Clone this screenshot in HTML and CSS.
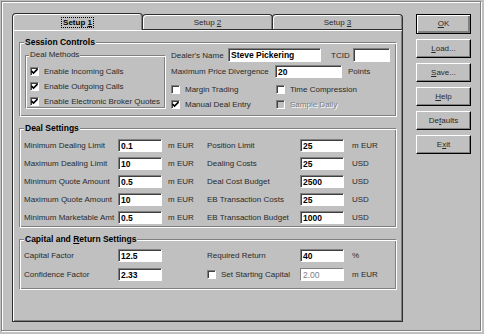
FILE: index.html
```html
<!DOCTYPE html>
<html lang="en">

<head>
    <meta charset="UTF-8">
    <title>Setup</title>
    <link rel="stylesheet" href="styles.css">
</head>

<body>
    <div class="dialog">
        <div class="tabctl">
            <div class="tabstrip">
                <div class="tab active"><span class="focus">Setup <u>1</u></span></div>
                <div class="tab">Setup <u>2</u></div>
                <div class="tab">Setup <u>3</u></div>
            </div>
            <div class="panel">
                <!-- Session Controls -->
                <div class="group session">
                    <div class="group-title">Session Controls</div>
                    <div class="session-body">
                        <div class="group methods">
                            <div class="group-title thin">Deal Methods</div>
                            <div class="check-list">
                                <div class="check"><span class="box"><svg width="7" height="7" viewBox="0 0 7 7"><path d="M0.5 3 L2.5 5 L6.5 1" /></svg></span>Enable Incoming Calls</div>
                                <div class="check"><span class="box"><svg width="7" height="7" viewBox="0 0 7 7"><path d="M0.5 3 L2.5 5 L6.5 1" /></svg></span>Enable Outgoing Calls</div>
                                <div class="check"><span class="box"><svg width="7" height="7" viewBox="0 0 7 7"><path d="M0.5 3 L2.5 5 L6.5 1" /></svg></span>Enable Electronic Broker Quotes</div>
                            </div>
                        </div>
                        <div class="dealer">
                            <div class="row row-name">
                                <span class="name-lbl">Dealer's Name</span>
                                <span class="field name-field">Steve Pickering</span>
                                <span class="tcid-lbl">TCID</span>
                                <span class="field tcid-field"></span>
                            </div>
                            <div class="row row-div">
                                <span class="div-lbl">Maximum Price Divergence</span>
                                <span class="field div-field">20</span>
                                <span class="unit">Points</span>
                            </div>
                            <div class="opts">
                                <div class="check"><span class="box"></span>Margin Trading</div>
                                <div class="check"><span class="box"></span>Time Compression</div>
                                <div class="check"><span class="box"><svg width="7" height="7" viewBox="0 0 7 7"><path d="M0.5 3 L2.5 5 L6.5 1" /></svg></span>Manual Deal Entry</div>
                                <div class="check disabled"><span class="box"></span>Sample Daily</div>
                            </div>
                        </div>
                    </div>
                </div>

                <!-- Deal Settings -->
                <div class="group deal">
                    <div class="group-title">Deal Settings</div>
                    <div class="grid">
                        <span>Minimum Dealing Limit</span><span class="field">0.1</span><span class="unit">m EUR</span>
                        <span>Position Limit</span><span class="field">25</span><span class="unit">m EUR</span>

                        <span>Maximum Dealing Limit</span><span class="field">10</span><span class="unit">m EUR</span>
                        <span>Dealing Costs</span><span class="field">25</span><span class="unit">USD</span>

                        <span>Minimum Quote Amount</span><span class="field">0.5</span><span class="unit">m EUR</span>
                        <span>Deal Cost Budget</span><span class="field">2500</span><span class="unit">USD</span>

                        <span>Maximum Quote Amount</span><span class="field">10</span><span class="unit">m EUR</span>
                        <span>EB Transaction Costs</span><span class="field">25</span><span class="unit">USD</span>

                        <span>Minimum Marketable Amt</span><span class="field">0.5</span><span class="unit">m EUR</span>
                        <span>EB Transaction Budget</span><span class="field">1000</span><span class="unit">USD</span>
                    </div>
                </div>

                <!-- Capital and Return Settings -->
                <div class="group capital">
                    <div class="group-title">Capital and <u>R</u>eturn Settings</div>
                    <div class="grid">
                        <span>Capital Factor</span><span class="field">12.5</span><span class="unit"></span>
                        <span>Required Return</span><span class="field">40</span><span class="unit">%</span>

                        <span>Confidence Factor</span><span class="field">2.33</span><span class="unit"></span>
                        <div class="check"><span class="box"></span>Set Starting Capital</div><span class="field off">2.00</span><span class="unit">m EUR</span>
                    </div>
                </div>
            </div>
        </div>

        <div class="buttons">
            <div class="btn default"><u>O</u>K</div>
            <div class="btn"><u>L</u>oad...</div>
            <div class="btn"><u>S</u>ave...</div>
            <div class="btn"><u>H</u>elp</div>
            <div class="btn">De<u>f</u>aults</div>
            <div class="btn">E<u>x</u>it</div>
        </div>
    </div>
</body>

</html>
```

FILE: styles.css
```css
/* win95 style dialog */
:root {
    --face: #c0c0c0;
    --shadow: #808080;
    --light: #fff;
    --dark: #000;
    --edge: #2e2e2e;
    --text: #2a2a2a;
}

* {
    padding: 0;
    margin: 0;
    box-sizing: border-box;
}

body {
    background-color: var(--face);
    font: 8px "Liberation Sans", Arial, sans-serif;
    color: var(--text);
}

u {
    text-decoration: underline;
}

/* outer etched frame */
.dialog {
    display: flex;
    width: 480px;
    height: 330px;
    margin: 1px;
    padding: 11px 0 0 10px;
    border: 1px solid var(--shadow);
    box-shadow: 1px 1px 0 var(--light), inset 1px 1px 0 var(--light);
}

/* tabs */
.tabctl {
    display: flex;
    flex-direction: column;
    width: 391px;
}

.tabstrip {
    display: flex;
    height: 16px;
    position: relative;
    z-index: 2;
}

.tab {
    flex: 1;
    height: 15px;
    margin-top: 1px;
    padding-top: 2px;
    line-height: 11px;
    text-align: center;
    border: 1px solid var(--edge);
    border-bottom: none;
    border-radius: 4px 4px 0 0;
    box-shadow: inset 1px 1px 0 var(--light), inset -1px 0 0 var(--shadow);
}

.tab + .tab {
    margin-left: -1px;
}

.tab.active {
    height: 17px;
    margin-top: 0;
    padding-top: 3px;
    font-weight: bold;
    color: #000;
    background-color: var(--face);
}

.tab .focus {
    padding: 0 1px;
    outline: 1px dotted #000;
}

.panel {
    height: 293px;
    padding: 12px 6px 0 6px;
    border: 1px solid var(--edge);
    box-shadow: inset 1px 1px 0 var(--light), inset -1px -1px 0 var(--shadow);
}

/* group boxes */
.group {
    position: relative;
    border: 1px solid var(--shadow);
}

.group::after {
    content: "";
    position: absolute;
    top: 0;
    left: 0;
    right: -2px;
    bottom: -2px;
    border: 1px solid var(--light);
    pointer-events: none;
}

.group-title {
    position: relative;
    z-index: 1;
    width: fit-content;
    margin: -6px 0 0 4px;
    padding: 0 1px;
    line-height: 10px;
    font-size: 8.5px;
    font-weight: bold;
    color: #000;
    background-color: var(--face);
}

.group-title.thin {
    margin-left: 3px;
    font-size: 8px;
    font-weight: normal;
    color: var(--text);
}

.session-body {
    display: flex;
    padding: 0 0 5px 5px;
}

.methods {
    width: 140px;
    height: 53px;
    margin-top: 8px;
}

.check-list {
    display: flex;
    flex-direction: column;
    gap: 4px;
    padding: 6px 0 0 4px;
}

.check {
    display: flex;
    align-items: center;
    height: 11px;
    line-height: 11px;
    white-space: nowrap;
}

.box {
    display: flex;
    width: 9px;
    height: 9px;
    margin-right: 5px;
    background-color: #fff;
    border: 1px solid;
    border-color: var(--shadow) var(--light) var(--light) var(--shadow);
    box-shadow: inset 1px 1px 0 #404040;
}

.box svg path {
    fill: none;
    stroke: #000;
    stroke-width: 1.6;
}

.check.disabled {
    color: var(--shadow);
    text-shadow: 1px 1px 0 var(--light);
}

.check.disabled .box {
    background-color: var(--face);
}

/* dealer name etc */
.dealer {
    margin-left: 6px;
    padding-top: 1px;
}

.row {
    display: flex;
    align-items: center;
}

.row-name {
    height: 14px;
}

.row-name .field {
    height: 14px;
}

.row-div {
    height: 13px;
    margin-top: 3px;
}

.name-lbl {
    width: 57px;
}

.name-field {
    width: 93px;
}

.tcid-lbl {
    width: 22px;
    margin-left: 10px;
}

.tcid-field {
    width: 37px;
}

.div-lbl {
    width: 104px;
}

.div-field {
    width: 67px;
}

.row-div .unit {
    margin-left: 6px;
}

.opts {
    display: grid;
    grid-template-columns: 105px auto;
    row-gap: 4px;
    margin-top: 6px;
}

/* edit fields */
.field {
    display: block;
    height: 13px;
    padding-left: 2px;
    line-height: 12px;
    font-size: 8.5px;
    font-weight: bold;
    color: #000;
    background-color: #fff;
    border: 1px solid;
    border-color: var(--shadow) var(--light) var(--light) var(--shadow);
    box-shadow: inset 1px 1px 0 #404040;
    white-space: nowrap;
    overflow: hidden;
}

.field.off {
    color: var(--shadow);
    font-weight: normal;
    box-shadow: none;
}

/* settings grids */
.deal,
.capital {
    margin-top: 12px;
}

.grid {
    display: grid;
    grid-template-columns: 94px 44px 45px 93px 44px auto;
    grid-auto-rows: 13px;
    align-items: center;
    row-gap: 5px;
    padding: 6px 0 2px 4px;
    white-space: nowrap;
}

.grid .unit {
    padding-left: 6px;
}

.grid .unit:nth-child(6n) {
    padding-left: 8px;
}

.capital .grid {
    row-gap: 6px;
    padding: 5px 0 7px 4px;
}

/* push buttons */
.buttons {
    display: flex;
    flex-direction: column;
    gap: 5px;
    width: 55px;
    margin-left: 13px;
    padding-top: 1px;
}

.btn {
    height: 19px;
    line-height: 17px;
    text-align: center;
    border: 1px solid;
    border-color: var(--light) var(--dark) var(--dark) var(--light);
    box-shadow: inset -1px -1px 0 var(--shadow);
}

.btn.default {
    height: 20px;
    line-height: 18px;
    border-color: var(--dark);
    box-shadow: inset 1px 1px 0 var(--light), inset -2px -2px 0 var(--shadow);
}
```
